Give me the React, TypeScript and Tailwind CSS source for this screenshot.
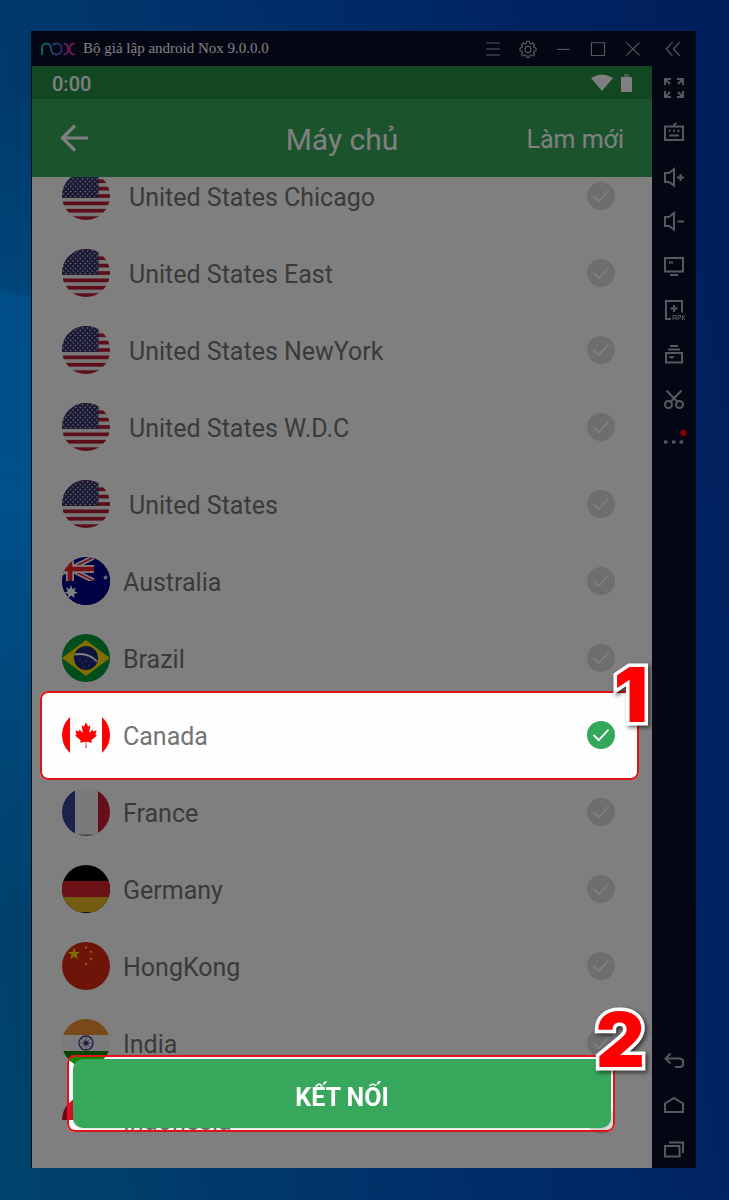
import { useState } from 'react'
import type { ReactNode } from 'react'

interface Server {
  id: string
  name: string
  flag: () => ReactNode
  indent?: boolean
}

const STAR = '0,-10 2.4,-3.2 9.5,-3.1 3.8,1.2 5.9,8.1 0,4 -5.9,8.1 -3.8,1.2 -9.5,-3.1 -2.4,-3.2'

function FlagUS() {
  const dots = []
  for (let row = 0; row < 10; row++) {
    for (let col = 0; col < 8; col++) {
      const cx = 1.5 + col * 4.8 + (row % 2) * 2.4
      if (cx < 36) {
        dots.push(<circle key={`${row}-${col}`} cx={cx} cy={2 + row * 2.5} r="0.8" />)
      }
    }
  }
  return (
    <>
      <rect width="48" height="48" fill="#f4f2f4" />
      {[0, 1, 2, 3, 4, 5, 6].map((i) => (
        <rect key={i} y={i * 7.38} width="48" height="3.7" fill="#b81c34" />
      ))}
      <rect width="36.5" height="25.8" fill="#38366c" />
      <g fill="#d8d6e4">{dots}</g>
    </>
  )
}

function FlagAustralia() {
  return (
    <>
      <rect width="48" height="48" fill="#00008b" />
      <g>
        <path d="M-16 0 32 24M32 0-16 24" stroke="#fff" strokeWidth="5" />
        <path d="M-16 0 32 24M32 0-16 24" stroke="#e8202c" strokeWidth="1.8" />
        <path d="M8 0V24M-16 12H32" stroke="#fff" strokeWidth="8" />
        <path d="M8 0V24M-16 12H32" stroke="#f0202c" strokeWidth="4.6" />
      </g>
      <path d="M32 0H48V24H32zM0 24H48V48H0z" fill="#00008b" />
      <path
        d="m9 28 1.4 4 3.8-1.6-2 3.7 3.8 1.8-4 1 .5 4.2L9 38.4l-3.2 2.9.4-4.3-4.2-1 3.8-1.8-2-3.7 3.8 1.5z"
        fill="#fff"
      />
      <polygon points={STAR} transform="translate(43.5 20.5) scale(.28)" fill="#fff" />
    </>
  )
}

function FlagBrazil() {
  return (
    <>
      <rect width="48" height="48" fill="#009b3a" />
      <path d="M24 6 48 24 24 42 0 24z" fill="#fedf00" />
      <circle cx="24" cy="24" r="12" fill="#1a2a7c" />
      <path d="M12.6 20.5Q26 18 35 27.5" fill="none" stroke="#fff" strokeWidth="1.8" />
      <g fill="#9fb0e0">
        <circle cx="17" cy="26" r=".6" />
        <circle cx="20" cy="29" r=".6" />
        <circle cx="24" cy="27" r=".6" />
        <circle cx="27" cy="31" r=".6" />
        <circle cx="22" cy="33" r=".6" />
        <circle cx="29" cy="28" r=".6" />
      </g>
    </>
  )
}

function FlagCanada() {
  return (
    <>
      <rect width="48" height="48" fill="#fff" />
      <path d="M0 0H8V48H0zM40 0H48V48H40z" fill="#f00" />
      <path
        transform="translate(24 24) scale(.0059 .0064)"
        fill="#f00"
        d="m-90 2030 45-863a95 95 0 0 0-111-98l-859 151 116-320a65 65 0 0 0-20-73l-941-762 212-99a65 65 0 0 0 34-79l-186-572 542 115a65 65 0 0 0 73-38l105-247 423 454a65 65 0 0 0 111-57l-204-1052 327 189a65 65 0 0 0 91-27l332-652 332 652a65 65 0 0 0 91 27l327-189-204 1052a65 65 0 0 0 111 57l423-454 105 247a65 65 0 0 0 73 38l542-115-186 572a65 65 0 0 0 34 79l212 99-941 762a65 65 0 0 0-20 73l116 320-859-151a95 95 0 0 0-111 98l45 863z"
      />
    </>
  )
}

function FlagFrance() {
  return (
    <>
      <rect width="48" height="48" fill="#f4f4f4" />
      <rect width="13" height="48" fill="#35449a" />
      <rect x="36" width="12" height="48" fill="#d01c34" />
      <path d="M16 46.5H32V48H16z" fill="#777" />
    </>
  )
}

function FlagGermany() {
  return (
    <>
      <rect width="48" height="48" fill="#000" />
      <rect y="16" width="48" height="16" fill="#d8232a" />
      <rect y="32" width="48" height="15" fill="#e8b923" />
    </>
  )
}

function FlagChina() {
  return (
    <>
      <rect width="48" height="48" fill="#de2910" />
      <g fill="#ffde00">
        <polygon points={STAR} transform="translate(12 12) scale(.64)" />
        <polygon points={STAR} transform="translate(24 5.5) scale(.2)" />
        <polygon points={STAR} transform="translate(29 10) scale(.2)" />
        <polygon points={STAR} transform="translate(29 17) scale(.2)" />
        <polygon points={STAR} transform="translate(24 22) scale(.2)" />
      </g>
    </>
  )
}

function FlagIndia() {
  return (
    <>
      <rect width="48" height="48" fill="#f6f6f6" />
      <rect width="48" height="16" fill="#f29334" />
      <rect y="32" width="48" height="16" fill="#128807" />
      <g fill="none" stroke="#4a4795">
        <circle cx="24" cy="24" r="7" strokeWidth="1.4" />
        <path d="M24 17V31M17 24H31M19 19 29 29M29 19 19 29" strokeWidth=".6" />
      </g>
      <circle cx="24" cy="24" r="2.6" fill="#4a4795" />
    </>
  )
}

function FlagIndonesia() {
  return (
    <>
      <rect width="48" height="48" fill="#fff" />
      <rect width="48" height="24" fill="#dc0f28" />
    </>
  )
}

const SERVERS: Server[] = [
  { id: 'us-chi', name: 'United States Chicago', flag: FlagUS, indent: true },
  { id: 'us-east', name: 'United States East', flag: FlagUS, indent: true },
  { id: 'us-ny', name: 'United States NewYork', flag: FlagUS, indent: true },
  { id: 'us-wdc', name: 'United States W.D.C', flag: FlagUS, indent: true },
  { id: 'us', name: 'United States', flag: FlagUS, indent: true },
  { id: 'au', name: 'Australia', flag: FlagAustralia },
  { id: 'br', name: 'Brazil', flag: FlagBrazil },
  { id: 'ca', name: 'Canada', flag: FlagCanada },
  { id: 'fr', name: 'France', flag: FlagFrance },
  { id: 'de', name: 'Germany', flag: FlagGermany },
  { id: 'hk', name: 'HongKong', flag: FlagChina },
  { id: 'in', name: 'India', flag: FlagIndia },
  { id: 'id', name: 'Indonesia', flag: FlagIndonesia },
]

function NoxLogo() {
  return (
    <svg viewBox="0 0 34 14" className="h-[14px] w-[34px]" fill="none" strokeWidth="1.8" aria-hidden="true">
      <defs>
        <linearGradient id="nox" gradientUnits="userSpaceOnUse" x1="0" y1="0" x2="34" y2="0">
          <stop offset="0" stopColor="#1fe0b4" />
          <stop offset=".3" stopColor="#35a0d8" />
          <stop offset=".6" stopColor="#6a4ad0" />
          <stop offset=".85" stopColor="#e0309c" />
          <stop offset="1" stopColor="#f03078" />
        </linearGradient>
      </defs>
      <g stroke="url(#nox)">
        <path d="M1 13V6.500Q1 1.500 5.500 1.500Q9.500 1.500 10 6.500Q10.500 12.500 15.500 12.500Q20.500 12 20.500 7Q20.500 1.500 15.500 1.500Q13 1.500 11.500 3" />
        <path d="M22.500 1.500Q27 1.500 27 7Q27 12.500 22.500 12.500M33.500 1.500Q28.500 1.500 28.500 7Q28.500 12.500 33.500 12.500" />
      </g>
    </svg>
  )
}

interface ToolButtonProps {
  label: string
  size?: string
  children: ReactNode
}

function ToolButton({ label, size = 'size-5', children }: ToolButtonProps) {
  return (
    <button type="button" aria-label={label} className={`${size} shrink-0 text-[#b0b1b9]`}>
      <svg viewBox="0 0 20 20" className="size-full overflow-visible" fill="none" stroke="currentColor" strokeWidth="2">
        {children}
      </svg>
    </button>
  )
}

function TitleBar() {
  return (
    <div className="flex h-[35px] items-center bg-[#0a0c28] pr-[15px] pl-[9px]">
      <NoxLogo />
      <h1 className="ml-2 flex-1 truncate font-['Liberation_Serif',serif] text-[15px] text-white">
        Bộ giả lập android Nox 9.0.0.0
      </h1>
      <div className="flex items-center gap-[19px]">
        <ToolButton label="Menu" size="size-4">
          <path d="M1.500 2.500H18.500M1.500 10H18.500M1.500 17.500H18.500" strokeWidth="1.300" />
        </ToolButton>
        <ToolButton label="Settings" size="size-4">
          <path
            strokeWidth="1.400"
            d="M8.300.5h3.400l.5 2.700 1.500.6 2.300-1.600 2.300 2.300-1.500 2.300.6 1.500 2.700.5v3.400l-2.700.5-.6 1.500 1.500 2.300-2.300 2.300-2.300-1.500-1.500.6-.5 2.600H8.300l-.5-2.600-1.500-.6L4 18.800l-2.300-2.300 1.500-2.300-.6-1.500-2.600-.5V8.800l2.600-.5.6-1.500L1.700 4.500 4 2.200l2.300 1.600 1.500-.6z"
          />
          <circle cx="10" cy="10.500" r="3.800" strokeWidth="1.400" />
        </ToolButton>
        <ToolButton label="Minimize" size="size-4">
          <path d="M2 10.500H18" strokeWidth="1.400" />
        </ToolButton>
        <ToolButton label="Maximize" size="size-4">
          <path d="M1.800 2.200H18.200V18.200H1.800z" strokeWidth="1.400" />
        </ToolButton>
        <ToolButton label="Close" size="size-4">
          <path d="M1.800 2 18.200 18M18.200 2 1.800 18" strokeWidth="1.400" />
        </ToolButton>
      </div>
      <div className="ml-6 flex">
        <ToolButton label="Collapse toolbar" size="size-4">
          <path d="M9.500 1.500 1.500 10 9.500 18.500M18.500 1.500 10.500 10 18.500 18.500" strokeWidth="1.500" />
        </ToolButton>
      </div>
    </div>
  )
}

function SideBar() {
  return (
    <aside className="flex w-11 shrink-0 flex-col items-center justify-between bg-[#0a0c28] pt-3 pb-[9px]">
      <div className="flex h-[375px] flex-col justify-between">
        <ToolButton label="Full screen">
          <path d="M1 7V1H7M1.500 1.500 6 6M13 1H19V7M18.500 1.500 14 6M1 13V19H7M1.500 18.500 6 14M19 13V19H13M18.500 18.500 14 14" />
        </ToolButton>
        <ToolButton label="Keyboard">
          <path d="M1 4.500H19V18H1zM10 4.500V3L12.500 1M4.500 8.800H6.500M9 8.800H11M13.500 8.800H15.500M5 13.500H15" />
        </ToolButton>
        <ToolButton label="Volume up">
          <path d="M1 6V15H5L10 18.500V2L5 6zM13 10.500H20M16.500 7V14" />
        </ToolButton>
        <ToolButton label="Volume down">
          <path d="M1 6V15H5L10 18.500V2L5 6zM13.500 10.500H20" />
        </ToolButton>
        <ToolButton label="Virtual screen">
          <path d="M1 2H19V15.500H1zM5 6.500H9M6 19H14" />
        </ToolButton>
        <ToolButton label="Install APK">
          <path d="M7 19H2V1H18V12.500M10 5V12M6.500 8.500H13.500" />
          <path d="M9 20V15.500H12V20M9 18H12M14 20V15.500H16.500V18H14M18.500 15V20M21 15.500 19 17.800 21 20" strokeWidth="1" />
        </ToolButton>
        <ToolButton label="Multi-instance manager">
          <path d="M2 9H18V18.500H2zM4 5.500H16M6 2H14M5.500 13.200H10" />
        </ToolButton>
        <ToolButton label="Screenshot">
          <path d="M2.500 1.500 14 13.500M17.500 1.500 6 13.500" />
          <circle cx="4.500" cy="15.500" r="3.500" />
          <circle cx="15.500" cy="15.500" r="3.500" />
        </ToolButton>
        <ToolButton label="More">
          <path d="M0 9H3.500M8 9H11.500M15.500 9H19" strokeWidth="3" />
          <circle cx="19.500" cy="0" r="3.300" fill="#ff0000" stroke="none" />
        </ToolButton>
      </div>
      <div className="flex flex-col gap-6">
        <ToolButton label="Back">
          <path d="M6.500 2.500 1.500 7.500 6.500 12.500M1.500 7.500H16L19 9V14.500L17 16H11" />
        </ToolButton>
        <ToolButton label="Home">
          <path d="M1 17V8.500L10 3 19 8.500V17z" />
        </ToolButton>
        <ToolButton label="Recent apps">
          <path d="M1 7H15.500V17.500H1zM5 3.500H19V14" />
        </ToolButton>
      </div>
    </aside>
  )
}

function StatusBar() {
  return (
    <div className="flex h-[33px] items-center justify-between bg-[#268e44] px-5 text-white">
      <span className="pt-0.5 text-xl font-medium">0:00</span>
      <div className="flex items-center gap-2">
        <svg viewBox="0 0 22 18" className="h-[18px] w-[22px]" aria-hidden="true">
          <path d="M0 4Q11-3 22 4L11 17z" fill="currentColor" />
        </svg>
        <svg viewBox="0 0 11 18" className="h-[18px] w-[11px]" fill="currentColor" aria-hidden="true">
          <path d="M3 0H8V3H3z" opacity=".5" />
          <rect y="3" width="11" height="15" rx="1" />
        </svg>
      </div>
    </div>
  )
}

function AppHeader() {
  return (
    <header className="grid h-[78px] grid-cols-[1fr_auto_1fr] items-center bg-[#37a75b] px-7 text-white">
      <button type="button" aria-label="Quay lại" className="justify-self-start">
        <svg viewBox="0 0 28 28" className="size-7" fill="none" stroke="currentColor" strokeWidth="3.2">
          <path d="M15 1.500 2.500 14 15 26.500M2.500 14H28" />
        </svg>
      </button>
      <h2 className="pt-[3px] text-3xl">Máy chủ</h2>
      <button type="button" className="justify-self-end pt-[3px] text-[25px]">
        Làm mới
      </button>
    </header>
  )
}

function StepNumber({ value, className }: { value: number; className: string }) {
  return (
    <span
      className={`absolute font-['Inter',sans-serif] text-[76px] leading-none font-black text-[#ff0000] [paint-order:stroke] [-webkit-text-stroke:7px_white] drop-shadow-[2px_2px_2px_rgba(0,0,0,0.6)] ${className}`}
    >
      {value}
    </span>
  )
}

interface ServerRowProps {
  server: Server
  selected: boolean
  onSelect: () => void
}

function ServerRow({ server, selected, onSelect }: ServerRowProps) {
  return (
    <label className="relative flex h-[77px] cursor-pointer items-center gap-[13px] pr-[37px] pl-[30px]">
      <svg viewBox="0 0 48 48" className="size-12 shrink-0 rounded-full" aria-hidden="true">
        {server.flag()}
      </svg>
      <span className={`flex-1 pt-1 text-[25px] text-[#757575] ${server.indent ? 'pl-1.5' : ''}`}>{server.name}</span>
      <input
        type="radio"
        name="server"
        className="peer sr-only"
        checked={selected}
        onChange={onSelect}
      />
      <svg viewBox="0 0 28 28" className="size-7 shrink-0 text-[#dcdcdc] peer-checked:text-[#35a85a]" aria-hidden="true">
        <circle cx="14" cy="14" r="14" fill="currentColor" />
        <path d="M6.500 14 11.800 19.200 21.500 8.500" fill="none" stroke="#fff" strokeWidth="1.800" />
      </svg>
      {selected && (
        <span className="pointer-events-none absolute -top-[5px] right-[13px] -bottom-[7px] left-2 z-20 rounded-lg border-2 border-[#e01418] backdrop-brightness-200" />
      )}
      {selected && <StepNumber value={1} className="-top-10 right-1 z-30" />}
    </label>
  )
}

export default function App() {
  const [selected, setSelected] = useState('ca')

  return (
    <div className="flex min-h-screen [background:linear-gradient(194deg,transparent_24.5%,rgba(0,120,200,0.16)_24.8%,transparent_45%)_0_0/31px_100%_no-repeat,radial-gradient(ellipse_at_0%_42%,#00508a_0%,#00407400_42%),linear-gradient(80deg,#00446c_0%,#00306a_45%,#00215f_85%,#00205c_100%)] pt-[31px] pr-[33px] pb-8 pl-[31px] font-['Roboto',sans-serif]">
      <div className="relative flex flex-1 flex-col border-l border-[#060818]">
        <TitleBar />
        <div className="flex flex-1">
          <div className="relative flex flex-1 flex-col bg-white">
            <StatusBar />
            <AppHeader />
            <main className="flex-1 overflow-hidden">
              <div className="-mt-5">
                {SERVERS.map((server) => (
                  <ServerRow
                    key={server.id}
                    server={server}
                    selected={server.id === selected}
                    onSelect={() => setSelected(server.id)}
                  />
                ))}
              </div>
            </main>
            <div className="absolute right-[37px] bottom-9 left-[35px] z-20 rounded-lg border-2 border-[#e01418] py-0.5 pr-0.5 pl-1 backdrop-brightness-200">
              <button
                type="button"
                className="block h-[69px] w-full rounded-[10px] bg-[#37a75b] pt-2 text-[25px] font-bold text-white shadow-sm"
              >
                KẾT NỐI
              </button>
              <StepNumber value={2} className="-top-14 -right-8 z-30" />
            </div>
          </div>
          <SideBar />
        </div>
        {/* dims everything except the highlighted steps */}
        <div className="pointer-events-none absolute inset-0 z-10 bg-black/50" />
      </div>
    </div>
  )
}
